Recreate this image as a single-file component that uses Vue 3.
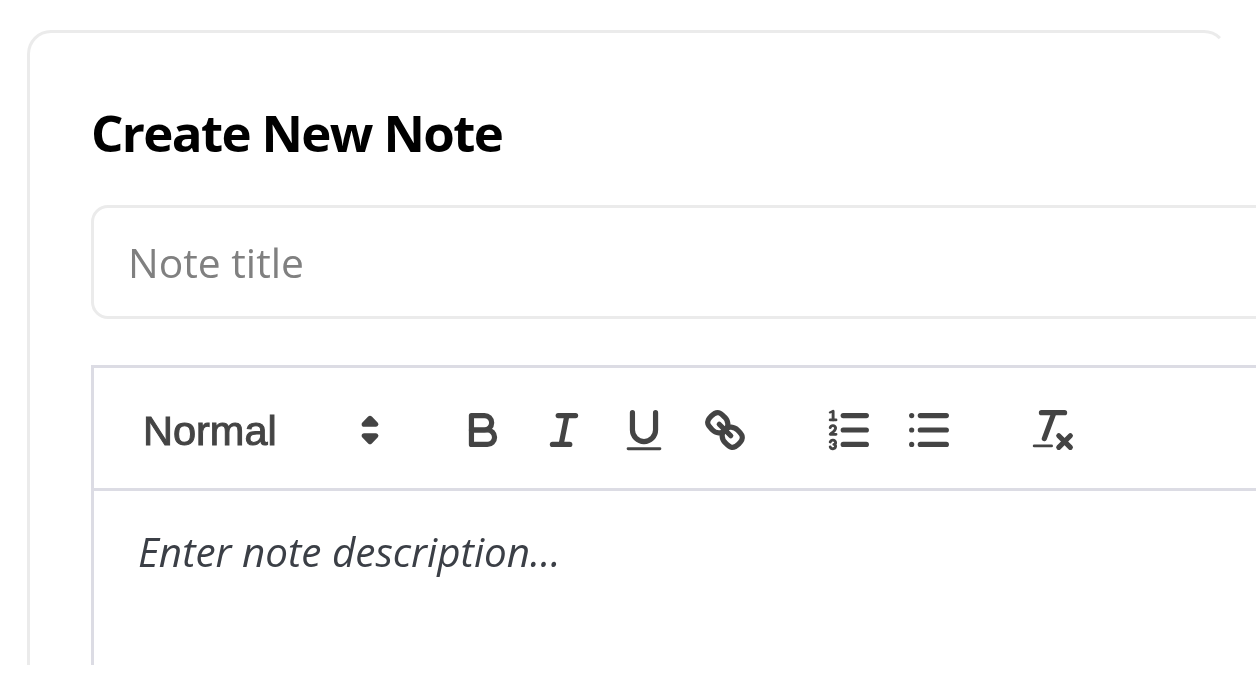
<template>
  <div class="page">
    <div class="card">
      <h2 class="card-title">Create New Note</h2>
      <input class="title-input" type="text" placeholder="Note title">

      <div class="editor">
        <div class="toolbar">
          <span class="formats">
            <span class="picker">
              <span class="picker-label">Normal</span>
              <svg class="icon" viewBox="0 0 18 18">
                <polygon class="st fl" points="7 11 9 13 11 11 7 11" />
                <polygon class="st fl" points="7 7 9 5 11 7 7 7" />
              </svg>
            </span>
          </span>
          <span class="formats">
            <button class="tool" type="button" aria-label="Bold">
              <svg class="icon" viewBox="0 0 18 18">
                <path class="st" d="M5,4H9.5A2.5,2.5,0,0,1,12,6.5v0A2.5,2.5,0,0,1,9.5,9H5A0,0,0,0,1,5,9V4A0,0,0,0,1,5,4Z" />
                <path class="st" d="M5,9h5.5A2.5,2.5,0,0,1,13,11.5v0A2.5,2.5,0,0,1,10.5,14H5a0,0,0,0,1,0,0V9A0,0,0,0,1,5,9Z" />
              </svg>
            </button>
            <button class="tool" type="button" aria-label="Italic">
              <svg class="icon" viewBox="0 0 18 18">
                <line class="st" x1="7" x2="13" y1="4" y2="4" />
                <line class="st" x1="5" x2="11" y1="14" y2="14" />
                <line class="st" x1="8" x2="10" y1="14" y2="4" />
              </svg>
            </button>
            <button class="tool" type="button" aria-label="Underline">
              <svg class="icon" viewBox="0 0 18 18">
                <path class="st" d="M5,3V9a4.012,4.012,0,0,0,4,4H9a4.012,4.012,0,0,0,4-4V3" />
                <rect class="fi" x="3" y="15" width="12" height="1" rx="0.5" ry="0.5" />
              </svg>
            </button>
            <button class="tool" type="button" aria-label="Link">
              <svg class="icon" viewBox="0 0 18 18">
                <line class="st" x1="7" x2="11" y1="7" y2="11" />
                <path class="st" d="M8.9,4.577a3.476,3.476,0,0,1,.36,4.679A3.476,3.476,0,0,1,4.577,8.9C3.185,7.5,2.035,6.4,4.217,4.217S7.5,3.185,8.9,4.577Z" />
                <path class="st" d="M13.423,9.1a3.476,3.476,0,0,0-4.679-.36,3.476,3.476,0,0,0,.36,4.679c1.392,1.392,2.5,2.542,4.679.36S14.815,10.5,13.423,9.1Z" />
              </svg>
            </button>
          </span>
          <span class="formats">
            <button class="tool" type="button" aria-label="Ordered list">
              <svg class="icon" viewBox="0 0 18 18">
                <line class="st" x1="7" x2="15" y1="4" y2="4" />
                <line class="st" x1="7" x2="15" y1="9" y2="9" />
                <line class="st" x1="7" x2="15" y1="14" y2="14" />
                <line class="st thin" x1="2.5" x2="4.5" y1="5.5" y2="5.5" />
                <path class="fi" d="M3.5,6A0.5,0.5,0,0,1,3,5.5V3.085l-0.276.138A0.5,0.5,0,0,1,2.053,3c-0.124-.247-0.023-0.324.224-0.447l1-.5A0.5,0.5,0,0,1,4,2.5v3A0.5,0.5,0,0,1,3.5,6Z" />
                <path class="st thin" d="M4.5,10.5h-2c0-.234,1.85-1.076,1.85-2.234A0.959,0.959,0,0,0,2.5,8.156" />
                <path class="st thin" d="M2.5,14.846a0.959,0.959,0,0,0,1.85-.109A0.7,0.7,0,0,0,3.75,14a0.688,0.688,0,0,0,.6-0.736,0.959,0.959,0,0,0-1.85-.109" />
              </svg>
            </button>
            <button class="tool" type="button" aria-label="Bullet list">
              <svg class="icon" viewBox="0 0 18 18">
                <line class="st" x1="6" x2="15" y1="4" y2="4" />
                <line class="st" x1="6" x2="15" y1="9" y2="9" />
                <line class="st" x1="6" x2="15" y1="14" y2="14" />
                <line class="st" x1="3" x2="3" y1="4" y2="4" />
                <line class="st" x1="3" x2="3" y1="9" y2="9" />
                <line class="st" x1="3" x2="3" y1="14" y2="14" />
              </svg>
            </button>
          </span>
          <span class="formats">
            <button class="tool" type="button" aria-label="Clear formatting">
              <svg class="icon" viewBox="0 0 18 18">
                <line class="st" x1="5" x2="13" y1="3" y2="3" />
                <line class="st" x1="6" x2="9.35" y1="12" y2="3" />
                <line class="st" x1="11" x2="15" y1="11" y2="15" />
                <line class="st" x1="15" x2="11" y1="11" y2="15" />
                <rect class="fi" x="2" y="14" width="7" height="1" rx="0.5" ry="0.5" />
              </svg>
            </button>
          </span>
        </div>
        <div class="editor-body">
          <p class="editor-placeholder">Enter note description...</p>
        </div>
      </div>
    </div>
  </div>
</template>

<script setup>
</script>

<style scoped>
.page {
  width: 1256px;
  height: 665px;
  overflow: hidden;
  box-sizing: border-box;
  padding: 30px 0 0 27px;
  background: #fff;
  filter: blur(0.7px);
}

.card {
  width: 1201px;
  height: 800px;
  box-sizing: border-box;
  padding: 67px 0 0 61px;
  border: 3px solid #ebebeb;
  border-right-color: transparent;
  border-radius: 24px 24px 0 0;
}

.card-title {
  margin: 0 0 41px;
  font-family: "Open Sans", "Noto Sans", sans-serif;
  font-size: 51px;
  line-height: 64px;
  font-weight: 700;
  letter-spacing: -1.65px;
  color: #000;
}

.title-input {
  display: block;
  width: 1300px;
  height: 114px;
  box-sizing: border-box;
  padding: 0 34px;
  margin-bottom: 46px;
  border: 3px solid #ebebeb;
  border-radius: 17px;
  outline: none;
  background: #fff;
  font-family: "Open Sans", "Noto Sans", sans-serif;
  font-size: 40.8px;
  color: #222;
}

.title-input::placeholder {
  color: #808080;
  opacity: 1;
}

.editor {
  width: 1300px;
  border: 3px solid #dcdce4;
}

.toolbar {
  display: flex;
  align-items: center;
  height: 123px;
  box-sizing: border-box;
  padding: 4px 20px 0;
  border-bottom: 3px solid #dcdce4;
}

.formats {
  display: flex;
  margin-right: 43px;
}

.picker {
  display: flex;
  align-items: center;
  justify-content: space-between;
  width: 282px;
  padding-left: 29px;
  margin-right: 4px;
  box-sizing: border-box;
}

.picker-label {
  padding-top: 2px;
  font-family: "Liberation Sans", Arial, sans-serif;
  font-size: 41.5px;
  color: #444;
  -webkit-text-stroke: 1px #444;
}

.tool {
  display: flex;
  align-items: center;
  justify-content: center;
  width: 80.6px;
  height: 70px;
  padding: 0;
  border: none;
  background: none;
}

.icon {
  display: block;
  width: 52px;
  height: 52px;
}

.st {
  fill: none;
  stroke: #444;
  stroke-width: 1.8;
  stroke-linecap: round;
  stroke-linejoin: round;
}

.st.fl {
  fill: #444;
}

.st.thin {
  stroke-width: 1;
}

.fi {
  fill: #444;
}

.editor-body {
  min-height: 400px;
  padding: 34px 44px;
}

.editor-placeholder {
  margin: 0;
  font-family: "Open Sans", "Noto Sans", sans-serif;
  font-size: 40.4px;
  line-height: 54px;
  font-style: italic;
  color: #3b3f46;
}
</style>

<style>
html, body {
  background: #fff;
  overflow: hidden;
}
</style>
